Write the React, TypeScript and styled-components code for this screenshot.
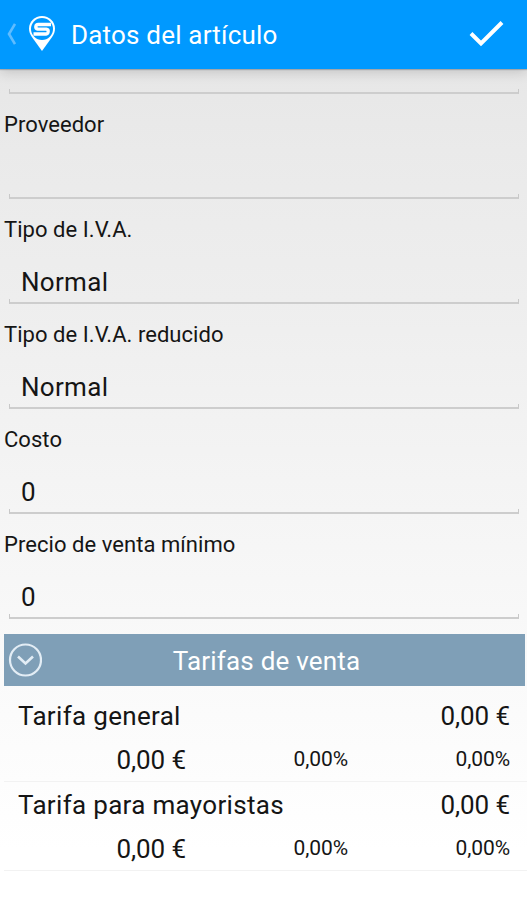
import React from "react";
import styled, { createGlobalStyle } from "styled-components";

const GlobalStyle = createGlobalStyle`
  * { box-sizing: border-box; }
  body { margin: 0; font-family: Roboto, "Liberation Sans", sans-serif; color: #151515; }
`;

const Screen = styled.div`
  width: 527px;
  height: 900px;
  overflow: hidden;
  display: flex;
  flex-direction: column;
  background: linear-gradient(#e7e7e7 69px, #eaeaea 150px, #eeeeee 300px, #f4f4f4 480px, #fafafa 680px, #ffffff 850px);
`;

const Header = styled.header`
  height: 69px;
  flex: none;
  display: flex;
  align-items: center;
  background: #0099ff;
  color: #fff;
  box-shadow: 0 1px 1px rgba(80, 90, 100, 0.35), 0 3px 12px rgba(0, 0, 0, 0.16);
`;

const BackIcon = styled.svg`
  width: 9px;
  height: 22px;
  margin: 0 0 2px 7px;
`;

const PinIcon = styled.svg`
  width: 26px;
  height: 35px;
  margin: 0 0 2px 13px;
`;

const Title = styled.h1`
  margin: 0 0 0 16px;
  font-size: 26px;
  line-height: 30px;
  font-weight: 400;
  letter-spacing: 0.2px;
  flex: 1;
  white-space: nowrap;
`;

const CheckIcon = styled.svg`
  width: 36px;
  height: 28px;
  margin: 0 23px 3px 0;
`;

const Form = styled.main`
  display: flex;
  flex-direction: column;
`;

const Underline = styled.div`
  height: 5px;
  margin: 0 8px 0 9px;
  border: 1px solid #c8c8c8;
  border-top: 0;
  border-bottom-width: 2px;
  border-bottom-color: #cdcdcd;
`;

const ScrolledField = styled.div`
  height: 25px;
  display: flex;
  flex-direction: column;
  justify-content: flex-end;
`;

const Field = styled.div`
  height: 105px;
  display: flex;
  flex-direction: column;
`;

const Label = styled.label`
  padding: 18px 0 0 4px;
  font-size: 22px;
  line-height: 26px;
  letter-spacing: 0.05px;
  white-space: nowrap;
`;

const Value = styled.div`
  flex: 1;
  padding: 24px 0 0 21px;
  font-size: 26px;
  line-height: 30px;
  letter-spacing: 0.3px;
`;

const SectionBar = styled.div`
  height: 52px;
  margin: 15px 2px 0 4px;
  display: grid;
  grid-template-columns: 46px 1fr 42px;
  align-items: center;
  background: #7f9fb7;
  color: #fff;
`;

const CircleIcon = styled.svg`
  width: 34px;
  height: 34px;
  margin-left: 4px;
`;

const SectionTitle = styled.h2`
  margin: 2px 0 0;
  font-size: 26px;
  line-height: 30px;
  font-weight: 400;
  letter-spacing: 0.2px;
  text-align: center;
`;

const RateList = styled.div`
  margin: 7px 0 0 4px;
`;

const Rate = styled.section`
  height: 89px;
  padding: 8px 17px 0 14px;
  border-bottom: 1px solid #f2f2f2;
`;

const RateHead = styled.div`
  height: 44px;
  display: flex;
  justify-content: space-between;
  font-size: 26px;
  line-height: 30px;
`;

const RateName = styled.span`
  letter-spacing: 0.32px;
`;

const Amount = styled.span`
  font-size: 26px;
  line-height: 30px;
  letter-spacing: -0.1px;
  text-align: right;
`;

const RateDetail = styled.div`
  display: grid;
  grid-template-columns: 168px 162px 162px;
  align-items: center;
`;

const Percent = styled.span`
  font-size: 21px;
  line-height: 28px;
  letter-spacing: -0.1px;
  padding-bottom: 2px;
  text-align: right;
`;

const fields = [
  { label: "Proveedor", value: "" },
  { label: "Tipo de I.V.A.", value: "Normal" },
  { label: "Tipo de I.V.A. reducido", value: "Normal" },
  { label: "Costo", value: "0" },
  { label: "Precio de venta mínimo", value: "0" },
];

const rates = ["Tarifa general", "Tarifa para mayoristas"];

export default function App() {
  return (
    <Screen>
      <GlobalStyle />
      <Header>
        <BackIcon viewBox="0 0 9 22">
          <path d="M8 1 L2 11 L8 21" fill="none" stroke="#5fbcff" strokeWidth="2.6" />
        </BackIcon>
        <PinIcon viewBox="0 0 26 35">
          <path
            d="M13 0C5.8 0 0 5.6 0 12.6c0 3.2 1.1 5.8 2.9 8.5L13 35l10.1-13.9c1.8-2.7 2.9-5.3 2.9-8.5C26 5.6 20.2 0 13 0z"
            fill="#fff"
          />
          <circle cx="13" cy="13" r="11" fill="#0099ff" />
          <path
            d="M22 8.5H9.2Q7 8.5 6.8 10.6T8.8 13.2H17.3Q19.4 13.4 19.2 15.6T17 18H4.5"
            fill="none"
            stroke="#fff"
            strokeWidth="3.3"
          />
        </PinIcon>
        <Title>Datos del artículo</Title>
        <CheckIcon viewBox="0 0 36 28">
          <path d="M3 14.5 L13 24.5 L34 3.5" fill="none" stroke="#fff" strokeWidth="4" />
        </CheckIcon>
      </Header>
      <Form>
        <ScrolledField>
          <Underline />
        </ScrolledField>
        {fields.map((f) => (
          <Field key={f.label}>
            <Label>{f.label}</Label>
            <Value>{f.value}</Value>
            <Underline />
          </Field>
        ))}
        <SectionBar>
          <CircleIcon viewBox="0 0 34 34" fill="none" stroke="#e3edf5">
            <circle cx="17.5" cy="17" r="15.5" strokeWidth="2.2" />
            <path d="M10 13.5 L17.5 20.5 L25 13.5" strokeWidth="2.6" />
          </CircleIcon>
          <SectionTitle>Tarifas de venta</SectionTitle>
        </SectionBar>
        <RateList>
          {rates.map((name) => (
            <Rate key={name}>
              <RateHead>
                <RateName>{name}</RateName>
                <Amount>0,00 €</Amount>
              </RateHead>
              <RateDetail>
                <Amount>0,00 €</Amount>
                <Percent>0,00%</Percent>
                <Percent>0,00%</Percent>
              </RateDetail>
            </Rate>
          ))}
        </RateList>
      </Form>
    </Screen>
  );
}
